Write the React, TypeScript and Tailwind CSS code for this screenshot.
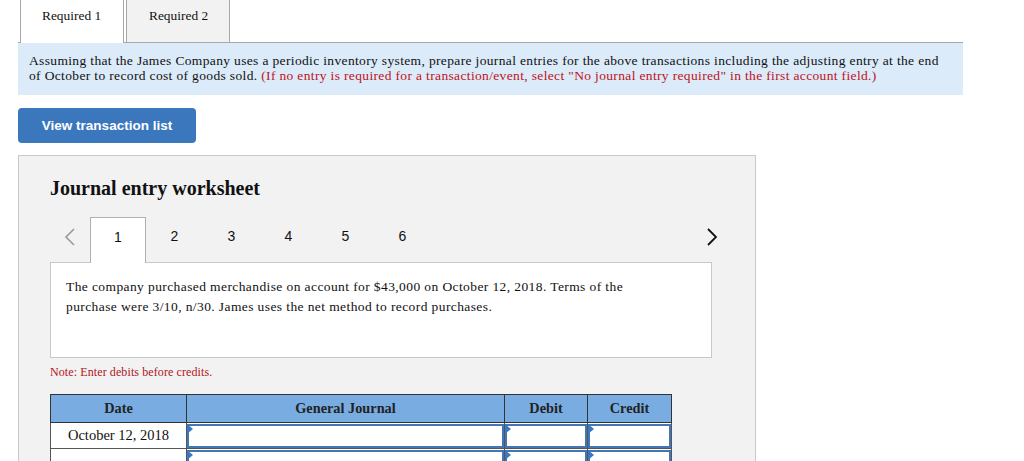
const serif = "font-['Liberation_Serif',_'Times_New_Roman',_serif]"
const sans = "font-['Liberation_Sans',_Arial,_sans-serif]"

function InputCell({ w }: { w: string }) {
  return (
    <td className={`${w} border border-[#555] p-0 bg-white`}>
      <div className="relative h-[24px] border-2 border-[#4475b4] bg-white">
        <span className="absolute left-[-2px] top-[-2px] w-0 h-0 border-t-[5px] border-b-[5px] border-l-[6px] border-t-transparent border-b-transparent border-l-[#3b78c2]" />
      </div>
    </td>
  )
}

export default function App() {
  const nums = ['2', '3', '4', '5', '6']
  return (
    <div className={`w-full h-[461px] overflow-hidden bg-white pl-[18px] ${serif} text-[#111]`}>
      {/* top tabs */}
      <div className="flex w-[945px] h-[43px]">
        <div className="w-[2px] border-b border-[#a8a8a8]" />
        <div className="w-[104px] h-[43px] border-l border-r border-[#a8a8a8] bg-white text-[13.4px] pt-[6px] pl-[21px]">
          Required 1
        </div>
        <div className="w-[2px] border-b border-[#a8a8a8]" />
        <div className="w-[104px] h-[43px] border-l border-r border-b border-[#a8a8a8] bg-[#f2f2f2] text-[13.4px] pt-[6px] pl-[22px]">
          Required 2
        </div>
        <div className="flex-1 border-b border-[#a8a8a8]" />
      </div>

      {/* instructions */}
      <div className="w-[945px] h-[52px] bg-[#dbebf9] px-[11px] pt-[10px] text-[13.5px] leading-[15px] tracking-[0.35px]">
        Assuming that the James Company uses a periodic inventory system, prepare journal entries for the above transactions including the adjusting entry at the end of October to record cost of goods sold.{' '}
        <span className="text-[#c0121c]">
          (If no entry is required for a transaction/event, select "No journal entry required" in the first account field.)
        </span>
      </div>

      <button className={`mt-[13px] w-[178px] h-[35px] rounded-[4px] bg-[#3a77bd] text-white font-bold text-[13.5px] pt-[2px] ${sans}`}>
        View transaction list
      </button>

      {/* worksheet */}
      <div className="mt-[12px] w-[738px] h-[400px] border border-[#c8c8c8] bg-[#f2f2f2] pl-[31px] pt-[21px]">
        <h2 className="font-bold text-[20px] leading-[22px]">Journal entry worksheet</h2>

        <div className={`mt-[18px] w-[662px] flex items-stretch h-[45px] ${sans}`}>
          <div className="w-[40px] flex items-center justify-center pb-[6px]">
            <svg width="12" height="18" viewBox="0 0 12 18" fill="none" stroke="#999" strokeWidth="1.6">
              <path d="M10 1 L2 9 L10 17" />
            </svg>
          </div>
          <div className="relative z-10 w-[56px] h-[46px] border border-b-0 border-[#b0b0b0] bg-white flex items-center justify-center text-[14px] pb-[6px]">
            1
          </div>
          {nums.map((n) => (
            <div key={n} className="w-[57px] flex items-center justify-center text-[14px] pb-[6px]">
              {n}
            </div>
          ))}
          <div className="flex-1 flex items-center justify-end pb-[6px]">
            <svg className="mr-[-6px]" width="12" height="18" viewBox="0 0 12 18" fill="none" stroke="#111" strokeWidth="1.8">
              <path d="M2 1 L10 9 L2 17" />
            </svg>
          </div>
        </div>

        <div className="w-[662px] h-[96px] border border-[#c8c8c8] bg-white pl-[15px] pt-[14px] text-[13.5px] leading-[20px] tracking-[0.4px]">
          The company purchased merchandise on account for $43,000 on October 12, 2018. Terms of the
          <br />
          purchase were 3/10, n/30. James uses the net method to record purchases.
        </div>

        <p className="mt-[6px] text-[12px] leading-[16px] tracking-[0.1px] text-[#b3141c]">Note: Enter debits before credits.</p>

        <table className="mt-[14px] w-[621px] border-collapse border border-[#666] table-fixed">
          <thead>
            <tr className="h-[28px] bg-[#79ade2] text-[14.3px] font-bold text-[#222]">
              <th className="w-[136px] border border-[#333] font-bold">Date</th>
              <th className="w-[318px] border border-[#333] font-bold">General Journal</th>
              <th className="w-[83px] border border-[#333] font-bold">Debit</th>
              <th className="w-[84px] border border-[#333] font-bold">Credit</th>
            </tr>
          </thead>
          <tbody>
            <tr className="h-[26px]">
              <td className="border border-[#555] bg-white text-center text-[14.5px]">October 12, 2018</td>
              <InputCell w="w-[318px]" />
              <InputCell w="w-[83px]" />
              <InputCell w="w-[84px]" />
            </tr>
            <tr className="h-[26px]">
              <td className="border border-[#555] bg-white" />
              <InputCell w="w-[318px]" />
              <InputCell w="w-[83px]" />
              <InputCell w="w-[84px]" />
            </tr>
          </tbody>
        </table>
      </div>
    </div>
  )
}
